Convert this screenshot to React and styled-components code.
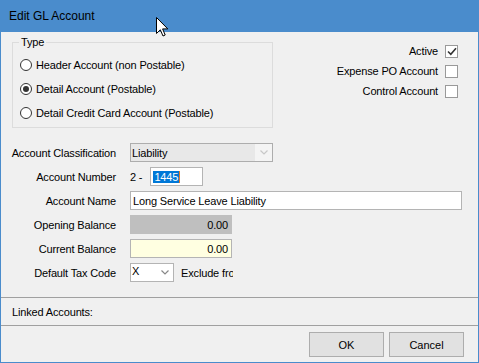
import React from "react";
import styled, { createGlobalStyle } from "styled-components";

const FONT = `"Liberation Sans", Arial, sans-serif`;

const GlobalStyle = createGlobalStyle`
  html, body {
    margin: 0;
    padding: 0;
    background: #ffffff;
  }
  * {
    box-sizing: border-box;
  }
`;

const Window = styled.div`
  width: 479px;
  height: 363px;
  display: flex;
  flex-direction: column;
  border: 1px solid #4a8ccc;
  border-top: none;
  background: #f0f0f0;
  font-family: ${FONT};
  font-size: 11px;
  letter-spacing: -0.15px;
  color: #000;
  position: relative;
  overflow: hidden;
`;

const TitleBar = styled.div`
  height: 32px;
  margin: 0 -1px;
  background: #4a8ccc;
  display: flex;
  align-items: center;
  padding-left: 9px;
  flex-shrink: 0;
  position: relative;
`;

const Title = styled.span`
  font-size: 12px;
  letter-spacing: 0;
  color: #000;
`;

const Cursor = styled.svg`
  position: absolute;
  left: 156px;
  top: 17px;
`;

const Content = styled.div`
  flex: 1;
  display: flex;
  flex-direction: column;
`;

const TopRow = styled.div`
  display: flex;
  justify-content: space-between;
  align-items: flex-start;
  padding-right: 20px;
`;

const TypeGroup = styled.fieldset`
  width: 261px;
  margin: 3px 0 0 11px;
  padding: 4px 0 2px 7px;
  border: 1px solid #dcdcdc;
  min-width: 0;
`;

const Legend = styled.legend`
  padding: 0 2px;
  margin-left: -1px;
  line-height: 14px;
  font-size: 11px;
`;

const RadioRow = styled.label`
  height: 24px;
  display: flex;
  align-items: center;
  gap: 4px;
`;

const RadioDot = styled.span`
  width: 12px;
  height: 12px;
  border-radius: 50%;
  border: 1px solid #333;
  background: #fff;
  display: flex;
  align-items: center;
  justify-content: center;
  &::after {
    content: "";
    width: 6px;
    height: 6px;
    border-radius: 50%;
    background: ${(p) => (p.checked ? "#333" : "transparent")};
  }
`;

const Flags = styled.div`
  margin-top: 9px;
  display: flex;
  flex-direction: column;
`;

const FlagRow = styled.label`
  height: 20px;
  display: flex;
  align-items: center;
  justify-content: flex-end;
  gap: 7px;
`;

const CheckBox = styled.span`
  width: 13px;
  height: 13px;
  border: 1px solid #999;
  background: #fff;
  display: flex;
  align-items: center;
  justify-content: center;
`;

const Form = styled.div`
  margin-top: 15px;
  display: grid;
  grid-template-columns: 115px 1fr;
  column-gap: 14px;
  row-gap: 5px;
  grid-auto-rows: 19px;
`;

const Label = styled.div`
  text-align: right;
  align-self: center;
  white-space: nowrap;
`;

const Field = styled.div`
  display: flex;
  align-items: center;
  gap: 8px;
`;

const Box = styled.div`
  width: ${(p) => p.w}px;
  height: 19px;
  border: 1px solid ${(p) => p.border || "#b4b4b4"};
  background: ${(p) => p.bg || "#fff"};
  display: flex;
  align-items: center;
  justify-content: ${(p) => (p.right ? "flex-end" : "flex-start")};
  padding: 0 3px 0 2px;
  white-space: nowrap;
  overflow: hidden;
`;

const SelectBox = styled.div`
  width: ${(p) => p.w}px;
  height: 19px;
  border: 1px solid ${(p) => (p.disabled ? "#adadad" : "#b4b4b4")};
  background: ${(p) => (p.disabled ? "#e8e8e8" : "#fff")};
  display: flex;
  align-items: ${(p) => (p.top ? "flex-start" : "center")};
  overflow: hidden;
`;

const SelectText = styled.span`
  flex: 1;
  padding-left: 1px;
  line-height: 14px;
`;

const Arrow = styled.span`
  width: 17px;
  align-self: stretch;
  display: flex;
  align-items: center;
  justify-content: center;
  background: ${(p) => (p.disabled ? "#f4f4f4" : "transparent")};
`;

const Prefix = styled.span`
  margin-left: 0;
`;

const Selected = styled.span`
  background: #0078d7;
  color: #fff;
  padding: 0 1px;
  border-right: 1px solid #e07a2a;
`;

const Clipped = styled.span`
  width: 52px;
  overflow: hidden;
  white-space: nowrap;
  margin-left: -1px;
`;

const Divider = styled.div`
  height: 1px;
  background: #a0a0a0;
  flex-shrink: 0;
`;

const LinkedBar = styled.div`
  height: 27px;
  display: flex;
  align-items: center;
  padding-left: 11px;
  flex-shrink: 0;
`;

const Footer = styled.div`
  height: 36px;
  display: flex;
  justify-content: flex-end;
  align-items: flex-start;
  gap: 5px;
  padding: 6px 14px 0 0;
  flex-shrink: 0;
`;

const Button = styled.button`
  width: 75px;
  height: 25px;
  border: 1px solid #adadad;
  background: #e1e1e1;
  font-family: ${FONT};
  font-size: 11px;
  color: #000;
  padding: 0;
`;

const Chevron = ({ color }) => (
  <svg width="8" height="5" viewBox="0 0 8 5">
    <path d="M0.5 0.5 L4 4 L7.5 0.5" fill="none" stroke={color} strokeWidth="1.2" />
  </svg>
);

const Check = () => (
  <svg width="10" height="9" viewBox="0 0 10 9">
    <path d="M1 4.5 L3.8 7.3 L9 1.2" fill="none" stroke="#333" strokeWidth="1.6" />
  </svg>
);

const radios = [
  { label: "Header Account (non Postable)", checked: false },
  { label: "Detail Account (Postable)", checked: true },
  { label: "Detail Credit Card Account (Postable)", checked: false },
];

const flags = [
  { label: "Active", checked: true },
  { label: "Expense PO Account", checked: false },
  { label: "Control Account", checked: false },
];

export default function App() {
  return (
    <>
      <GlobalStyle />
      <Window>
        <TitleBar>
          <Title>Edit GL Account</Title>
          <Cursor width="13" height="21" viewBox="0 0 13 21">
            <path
              d="M0.5 0.5 L0.5 16.5 L4.3 12.8 L7 19 L9.2 18 L6.6 11.9 L11.8 11.9 Z"
              fill="#fff"
              stroke="#000"
              strokeWidth="1"
              strokeLinejoin="miter"
            />
          </Cursor>
        </TitleBar>
        <Content>
          <TopRow>
            <TypeGroup>
              <Legend>Type</Legend>
              {radios.map((r) => (
                <RadioRow key={r.label}>
                  <RadioDot checked={r.checked} />
                  {r.label}
                </RadioRow>
              ))}
            </TypeGroup>
            <Flags>
              {flags.map((f) => (
                <FlagRow key={f.label}>
                  {f.label}
                  <CheckBox>{f.checked && <Check />}</CheckBox>
                </FlagRow>
              ))}
            </Flags>
          </TopRow>
          <Form>
            <Label>Account Classification</Label>
            <Field>
              <SelectBox w={143} disabled>
                <SelectText>Liability</SelectText>
                <Arrow disabled>
                  <Chevron color="#c8c8c8" />
                </Arrow>
              </SelectBox>
            </Field>

            <Label>Account Number</Label>
            <Field>
              <Prefix>2 -</Prefix>
              <Box w={53}>
                <Selected>1445</Selected>
              </Box>
            </Field>

            <Label>Account Name</Label>
            <Field>
              <Box w={332}>Long Service Leave Liability</Box>
            </Field>

            <Label>Opening Balance</Label>
            <Field>
              <Box w={102} bg="#bfbfbf" border="#bfbfbf" right>
                0.00
              </Box>
            </Field>

            <Label>Current Balance</Label>
            <Field>
              <Box w={102} bg="#ffffe1" right>
                0.00
              </Box>
            </Field>

            <Label>Default Tax Code</Label>
            <Field>
              <SelectBox w={44} top>
                <SelectText>X</SelectText>
                <Arrow>
                  <Chevron color="#888" />
                </Arrow>
              </SelectBox>
              <Clipped>Exclude from GST</Clipped>
            </Field>
          </Form>
        </Content>
        <Divider />
        <LinkedBar>Linked Accounts:</LinkedBar>
        <Divider />
        <Footer>
          <Button>OK</Button>
          <Button>Cancel</Button>
        </Footer>
      </Window>
    </>
  );
}
